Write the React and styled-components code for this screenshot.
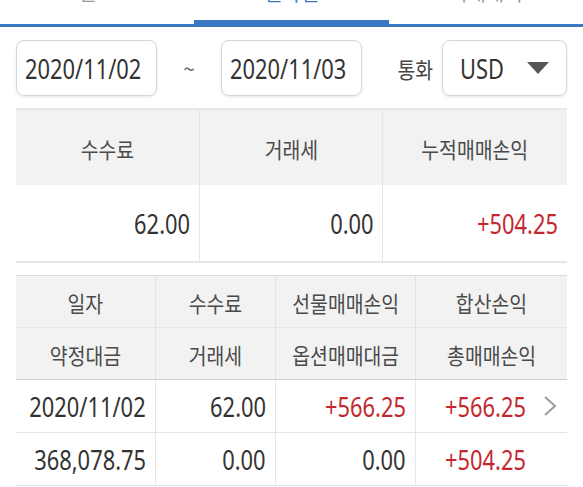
import React from "react";
import styled, { createGlobalStyle } from "styled-components";

const BLUE = "#3b78c4";
const RED = "#c3282e";

const GlobalStyle = createGlobalStyle`
  html, body {
    margin: 0;
    padding: 0;
    background: #fff;
  }
  body {
    font-family: "Noto Sans CJK KR", "Noto Sans", sans-serif;
    color: #333;
    overflow: hidden;
  }
`;

const Page = styled.div`
  width: 583px;
`;

// the app font is tall and narrow, so the glyphs are squeezed a little
const Num = styled.span`
  display: inline-block;
  white-space: nowrap;
  font-family: "Noto Sans", "Noto Sans CJK KR", sans-serif;
  font-size: 27px;
  transform: scaleX(0.81);
  transform-origin: ${(p) => p.$origin || "right"} center;
`;

const Label = styled.span`
  display: inline-block;
  white-space: nowrap;
  font-size: 22px;
  transform: scaleX(0.88);
  transform-origin: ${(p) => p.$origin || "center"} center;
`;

const TabBar = styled.nav`
  display: grid;
  grid-template-columns: repeat(3, 1fr);
  margin-top: -22px;
  border-bottom: 3px solid ${BLUE};
`;

const Tab = styled.div`
  height: 46px;
  line-height: 29px;
  text-align: center;
  font-size: 20px;
  color: ${(p) => (p.$active ? BLUE : "#9a9a9a")};
  box-shadow: ${(p) => (p.$active ? `inset 0 -4px 0 ${BLUE}` : "none")};
`;

const FilterBar = styled.div`
  display: flex;
  align-items: center;
  padding: 13px 16px 12px;
`;

const Field = styled.div`
  box-sizing: border-box;
  flex-shrink: 0;
  height: 56px;
  width: ${(p) => p.$w}px;
  display: flex;
  align-items: center;
  justify-content: space-between;
  padding: 0 ${(p) => p.$pr || 0}px 0 ${(p) => p.$pl}px;
  border: 1px solid #d6d6d6;
  border-radius: 8px;
  box-shadow: 0 1px 3px rgba(0, 0, 0, 0.1);
  color: #333;
  overflow: hidden;
`;

const Tilde = styled.span`
  flex-shrink: 0;
  width: 64px;
  text-align: center;
  font-size: 21px;
  color: #666;
`;

const FieldLabel = styled.span`
  margin-left: auto;
  margin-right: 7px;
  color: #444;
`;

const Summary = styled.div`
  margin: 0 16px;
  display: grid;
  grid-template-columns: repeat(3, 1fr);
  border-top: 2px solid #e6e6e6;
`;

const SumHead = styled.div`
  height: 75px;
  display: flex;
  align-items: center;
  justify-content: center;
  background: #f2f2f2;
  color: #4a4a4a;
  border-right: ${(p) => (p.$last ? "none" : "1px solid #e3e3e3")};
`;

const SumValue = styled.div`
  box-sizing: border-box;
  height: 78px;
  display: flex;
  align-items: center;
  justify-content: flex-end;
  padding-right: 9px;
  border-bottom: 2px solid #e6e6e6;
  border-right: ${(p) => (p.$last ? "none" : "1px solid #e6e6e6")};
  color: ${(p) => p.$color || "#333"};
`;

const Detail = styled.div`
  margin: 12px 16px 0;
  display: grid;
  grid-template-columns: 140px 120px 140px 1fr;
  border-top: 1px solid #dcdcdc;
`;

const HeadCell = styled.div`
  box-sizing: border-box;
  height: 52px;
  display: flex;
  align-items: center;
  justify-content: center;
  background: #f2f2f2;
  color: #4a4a4a;
  border-right: ${(p) => (p.$last ? "none" : "1px solid #e3e3e3")};
  border-bottom: 1px solid ${(p) => (p.$strong ? "#cfcfcf" : "#e6e6e6")};
`;

const DataCell = styled.div`
  box-sizing: border-box;
  height: 53px;
  display: flex;
  align-items: center;
  justify-content: flex-end;
  gap: 17px;
  padding-right: ${(p) => p.$pr || 9}px;
  border-right: ${(p) => (p.$last ? "none" : "1px solid #e6e6e6")};
  border-bottom: 1px solid #e6e6e6;
  color: ${(p) => p.$color || "#333"};
`;

const Caret = () => (
  <svg width="22" height="12" viewBox="0 0 22 12">
    <polygon points="0,0 22,0 11,12" fill="#555" />
  </svg>
);

const Chevron = () => (
  <svg width="14" height="22" viewBox="0 0 14 22">
    <polyline
      points="2,2 12,11 2,20"
      fill="none"
      stroke="#9c9c9c"
      strokeWidth="2"
    />
  </svg>
);

const tabs = ["잔고", "일자별", "거래내역"];

const heads = [
  ["일자", "수수료", "선물매매손익", "합산손익"],
  ["약정대금", "거래세", "옵션매매대금", "총매매손익"],
];

const rows = [
  [
    { v: "2020/11/02" },
    { v: "62.00" },
    { v: "+566.25", red: true },
    { v: "+566.25", red: true, more: true },
  ],
  [
    { v: "368,078.75" },
    { v: "0.00" },
    { v: "0.00" },
    { v: "+504.25", red: true },
  ],
];

export default function App() {
  return (
    <Page>
      <GlobalStyle />
      <TabBar>
        {tabs.map((t, i) => (
          <Tab key={t} $active={i === 1}>
            {t}
          </Tab>
        ))}
      </TabBar>

      <FilterBar>
        <Field $w={141} $pl={8}>
          <Num $origin="left">2020/11/02</Num>
        </Field>
        <Tilde>~</Tilde>
        <Field $w={141} $pl={8}>
          <Num $origin="left">2020/11/03</Num>
        </Field>
        <FieldLabel>
          <Label>통화</Label>
        </FieldLabel>
        <Field $w={125} $pl={17} $pr={17}>
          <Num $origin="left">USD</Num>
          <Caret />
        </Field>
      </FilterBar>

      <Summary>
        <SumHead><Label>수수료</Label></SumHead>
        <SumHead><Label>거래세</Label></SumHead>
        <SumHead $last><Label>누적매매손익</Label></SumHead>
        <SumValue><Num>62.00</Num></SumValue>
        <SumValue><Num>0.00</Num></SumValue>
        <SumValue $last $color={RED}><Num>+504.25</Num></SumValue>
      </Summary>

      <Detail>
        {heads.map((row, r) =>
          row.map((h, i) => (
            <HeadCell key={h + r} $strong={r === 1} $last={i === 3}>
              <Label>{h}</Label>
            </HeadCell>
          ))
        )}
        {rows.map((row, r) =>
          row.map((c, i) => (
            <DataCell
              key={`${r}-${i}`}
              $last={i === 3}
              $pr={i === 3 ? (c.more ? 10 : 41) : 9}
              $color={c.red ? RED : undefined}
            >
              <Num>{c.v}</Num>
              {c.more && <Chevron />}
            </DataCell>
          ))
        )}
      </Detail>
    </Page>
  );
}
